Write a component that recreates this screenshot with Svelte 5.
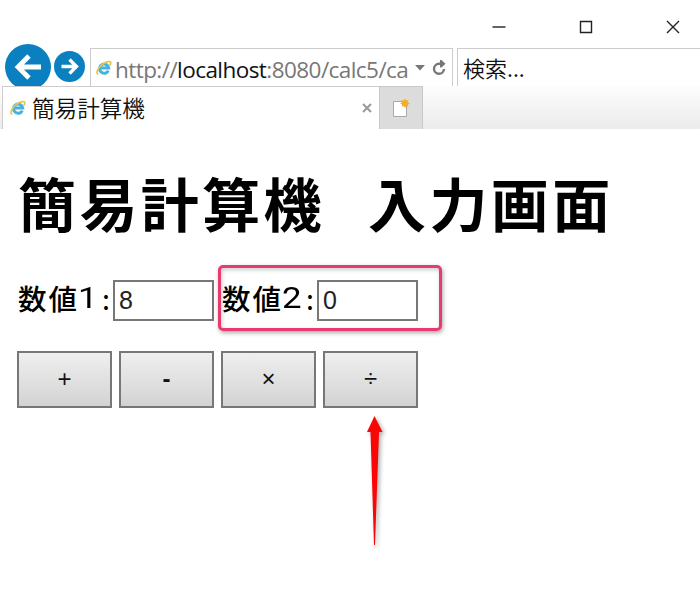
<script>
  const fields = [
    { name: '数値', digit: '1', value: '8' },
    { name: '数値', digit: '2', value: '0' }
  ];
  const operators = ['+', '-', '×', '÷'];
</script>

{#snippet ieIcon()}
  <svg class="ie" width="16" height="16" viewBox="0 0 16 16">
    <path d="M12.300 10.600A4.600 4.600 0 1 1 12.700 8H5" fill="none" stroke="#45b3df" stroke-width="3" />
    <path d="M2.400 14.400C-.6 13.700 1.500 8.200 6 4.700S15.200.4 14.800 3.200c-.1 1-.6 1.700-1 2.200" fill="none" stroke="#e8c54a" stroke-width="1.700" />
  </svg>
{/snippet}

<div class="window">
  <div class="titlebar">
    <svg width="14" height="14" viewBox="0 0 14 14"><path d="M.5 7h13" /></svg>
    <svg width="14" height="14" viewBox="0 0 14 14"><path d="M1.500 1.500h11v11h-11z" /></svg>
    <svg width="14" height="14" viewBox="0 0 14 14"><path d="M1 1l12 12M13 1L1 13" /></svg>
  </div>

  <div class="toolbar">
    <svg class="back" width="46" height="46" viewBox="0 0 46 46">
      <circle cx="23" cy="23" r="23" fill="#0b80c0" />
      <path d="M36 23H13M24 12L13 23l11 11" fill="none" stroke="#fff" stroke-width="4.800" />
    </svg>
    <svg class="forward" width="31" height="31" viewBox="0 0 31 31">
      <circle cx="15.500" cy="15.500" r="15.500" fill="#0b80c0" />
      <path d="M7.500 15.500h15M15.500 8.500l7 7-7 7" fill="none" stroke="#fff" stroke-width="3.300" />
    </svg>
    <div class="address">
      {@render ieIcon()}
      <span class="url"><span class="scheme">http://</span><b>localhost</b><span>:8080/calc5/ca</span></span>
      <svg class="caret" width="10" height="6" viewBox="0 0 10 6"><path d="M0 0h10L5 5.500z" fill="#777" /></svg>
      <svg class="reload" width="15" height="16" viewBox="0 0 15 16">
        <path d="M9.500 3.800H7A5 5 0 1 0 12 9" fill="none" stroke="#777" stroke-width="2.400" />
        <path d="M8 0h1.500L13.500 3.800 9.500 7.500H8z" fill="#777" />
      </svg>
    </div>
    <div class="search">検索...</div>
  </div>

  <div class="tabs">
    <div class="tab">
      {@render ieIcon()}
      <span>簡易計算機</span>
      <svg class="close" width="10" height="10" viewBox="0 0 10 10"><path d="M1 1l8 8M9 1L1 9" stroke="#999" stroke-width="2" /></svg>
    </div>
    <div class="newtab">
      <svg width="18" height="20" viewBox="0 0 18 20">
        <path d="M1.500 3.500h13v15h-13z" fill="#fff" stroke="#aaa" />
        <path d="M13 .5l1.200 2 2.300-.6-.6 2.300 2 1-2 1.200.6 2.300-2.300-.6-1.200 2-1.200-2-2.300.6.6-2.300-2-1.200 2-1-.6-2.300 2.300.6z" fill="#f5ad25" />
      </svg>
    </div>
  </div>

  <main>
    <h1><span>簡易計算機</span><span class="gap">　</span><span>入力画面</span></h1>
    <div class="fields">
      {#each fields as field}
        <label>
          <span class="name">{field.name}</span><span class="digit">{field.digit}</span><span class="colon">:</span>
          <input value={field.value} />
        </label>
      {/each}
      <div class="highlight"></div>
    </div>
    <div class="operators">
      {#each operators as op}
        <button class:minus={op === '-'}>{op}</button>
      {/each}
      <svg class="arrow" width="30" height="140" viewBox="0 0 30 140">
        <path d="M14.500 4l8 16h-3.500L15 133h-1L10.500 20H7z" fill="#f90606" />
      </svg>
    </div>
  </main>
</div>

<style>
  :global(body) { margin: 0; background: #fff; }
  .window {
    width: 700px;
    height: 595px;
    overflow: hidden;
    background: #fff;
    color: #111;
    font-family: "Liberation Sans", "Noto Sans CJK JP", sans-serif;
  }
  svg { display: block; flex: none; }
  .titlebar {
    height: 48px;
    box-sizing: border-box;
    display: flex;
    justify-content: flex-end;
    gap: 73px;
    padding: 19.500px 20px 0 0;
  }
  .titlebar path { fill: none; stroke: #222; stroke-width: 1.4; }
  .toolbar { display: flex; height: 38px; padding-left: 5px; }
  .back { margin-top: -4px; }
  .forward { margin: 3px 5px 0 3px; }
  .address {
    width: 363px;
    box-sizing: border-box;
    display: flex;
    align-items: center;
    border: solid #ccc;
    border-width: 1px 1px 0;
    padding-left: 5px;
  }
  .url {
    width: 294px;
    margin: 4px 0 0 3px;
    overflow: hidden;
    display: flex;
    white-space: nowrap;
    font: 22.500px/30px "Open Sans", "Noto Sans", sans-serif;
    letter-spacing: -.56px;
    color: #777;
  }
  .url b { font-weight: 400; color: #111; }
  .caret { margin-left: 6px; }
  .reload { margin-left: 7px; }
  .search {
    flex: 1;
    box-sizing: border-box;
    margin-left: 4px;
    border: solid #ccc;
    border-width: 1px 0 0 1px;
    padding: 0 0 0 5px;
    font: 22px/37px "Noto Sans CJK JP", sans-serif;
    font-weight: 350;
  }
  .tabs {
    position: relative;
    display: flex;
    height: 43px;
    padding-left: 2px;
    background: linear-gradient(#fdfdfd, #ebebeb);
  }
  .tab {
    width: 377px;
    box-sizing: border-box;
    display: flex;
    align-items: center;
    background: #fff;
    border: solid #ccc;
    border-width: 1px 0 0 1px;
    padding: 0 7px;
    font: 22.600px/40px "Noto Sans CJK JP", sans-serif;
    font-weight: 350;
  }
  .tab span { margin: 0 auto 0 6px; }
  .newtab {
    width: 44px;
    box-sizing: border-box;
    display: flex;
    justify-content: center;
    padding-top: 11px;
    background: #dcdcdc;
    border: solid #c8c8c8;
    border-width: 1px 1px 0;
  }
  main { padding-left: 17px; }
  h1 {
    display: flex;
    height: 151px;
    margin: 0;
    color: #000;
    font: 700 58px/147px "Noto Sans CJK JP", sans-serif;
    letter-spacing: 3.400px;
    text-indent: 1px;
    white-space: nowrap;
  }
  .gap { width: 42px; }
  .fields { position: relative; display: flex; gap: 4px; }
  label { display: flex; width: 200px; height: 41px; color: #000; }
  label span {
    flex: none;
    font: 500 28.500px/35px "Noto Sans CJK JP", sans-serif;
    white-space: nowrap;
  }
  .name { width: 61px; letter-spacing: 2px; text-indent: 1px; }
  label .digit {
    width: 24px;
    font: 400 29px/37px Roboto, "Liberation Sans", sans-serif;
    transform: scaleX(1.2);
    transform-origin: left;
  }
  label .colon { width: 11px; font-weight: 400; }
  input {
    width: 101px;
    height: 41px;
    box-sizing: border-box;
    border: 2px solid #777;
    border-radius: 0;
    padding: 0 4px;
    background: #fff;
    color: #222;
    font: 25px "Liberation Sans", Arial, sans-serif;
  }
  .highlight {
    position: absolute;
    left: 201px;
    top: -15px;
    width: 224px;
    height: 66px;
    box-sizing: border-box;
    border: 3px solid #e83a6e;
    border-radius: 5px;
    box-shadow: 1px 2px 4px #0005, inset 1px 2px 4px #0003;
  }
  .operators { position: relative; display: flex; gap: 7px; margin-top: 30px; }
  button {
    width: 95px;
    height: 57px;
    padding: 0 0 2px;
    border: 2px solid #777;
    border-radius: 0;
    background: linear-gradient(#efefef, #d3d3d3);
    color: #111;
    font: 24px/50px "Liberation Sans", Arial, sans-serif;
  }
  .minus { font-weight: 700; }
  .arrow {
    position: absolute;
    left: 343px;
    top: 61px;
    filter: drop-shadow(2px 2px 2px #0005);
  }
</style>
